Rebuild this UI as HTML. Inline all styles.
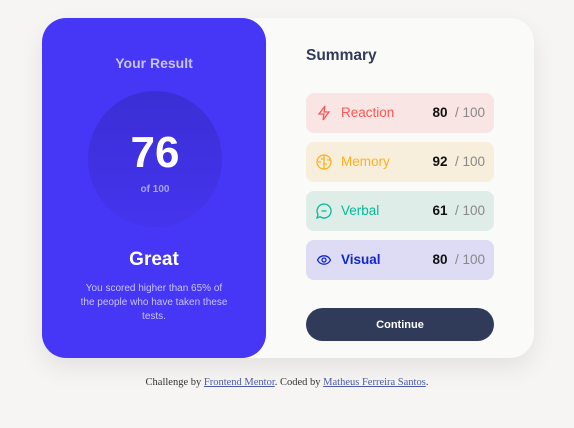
<!DOCTYPE html>
<html><head><style>
body{margin:0;width:574px;height:428px;background:#f6f5f3;font-family:"Liberation Sans",sans-serif;position:relative;overflow:hidden}
.card{position:absolute;left:42px;top:18px;width:492px;height:340px;background:#fafaf9;border-radius:24px;box-shadow:0 10px 24px rgba(0,0,0,.08)}
.left{position:absolute;left:42px;top:18px;width:224px;height:340px;background:#4636f5;border-radius:24px;text-align:center;color:#fff}
.yr{position:absolute;top:37px;width:100%;font-size:14px;font-weight:bold;color:#c8c3ff}
.circ{position:absolute;left:46px;top:73px;width:134px;height:136px;border-radius:50%;background:linear-gradient(#3a2fd4,#4534ee)}
.n{position:absolute;top:40px;width:100%;font-size:44px;font-weight:bold;line-height:44px}
.of{position:absolute;top:93px;width:100%;font-size:10px;font-weight:bold;color:#a9a2f5}
.g{position:absolute;top:231px;width:100%;font-size:19px;font-weight:bold}
.p{position:absolute;top:264px;left:38px;width:148px;font-size:10px;line-height:14px;color:#c8c3ff}
h2{position:absolute;left:306px;top:47px;margin:0;font-size:15.5px;color:#303b5a}
.row{position:absolute;left:306px;width:188px;height:40px;border-radius:8px;font-size:13.5px}
.row .ic{position:absolute;left:10px;top:12px}
.row .l{position:absolute;left:35px;top:12px}
.row .s{position:absolute;right:9px;top:12px;font-weight:bold;color:#111}
.row .s span{color:#888;font-weight:normal}
.btn{position:absolute;left:306px;top:308px;width:188px;height:33px;border-radius:17px;background:#303b5a;color:#fff;font-size:11px;font-weight:bold;text-align:center;line-height:34px}
.ft{position:absolute;top:377px;width:100%;text-align:center;font-family:"Liberation Serif",serif;font-size:10.5px;color:#333}
.ft a{color:#4a5aa8;text-decoration:underline}
</style></head><body>
<div class="card"></div>
<div class="left">
<div class="yr">Your Result</div>
<div class="circ"><div class="n">76</div><div class="of">of 100</div></div>
<div class="g">Great</div>
<div class="p">You scored higher than 65% of the people who have taken these tests.</div>
</div>
<h2>Summary</h2>
<div class="row" style="top:93px;background:#f9e5e3"><svg class="ic" width="16" height="16" viewBox="0 0 16 16" fill="none" stroke="#f55" stroke-width="1.3"><path d="M9 1 3 9h5l-1 6 6-8H8z"/></svg><span class="l" style="color:#f55">Reaction</span><span class="s">80 &nbsp;<span>/ 100</span></span></div>
<div class="row" style="top:142px;background:#f8eedc"><svg class="ic" width="16" height="16" viewBox="0 0 16 16" fill="none" stroke="#ffb01f" stroke-width="1.3"><circle cx="8" cy="8" r="7"/><path d="M8 1v14M8 5H5M8 10h3M5 8H2M11 6h3"/></svg><span class="l" style="color:#ffb01f">Memory</span><span class="s">92 &nbsp;<span>/ 100</span></span></div>
<div class="row" style="top:191px;background:#dfede9"><svg class="ic" width="16" height="16" viewBox="0 0 16 16" fill="none" stroke="#00ba98" stroke-width="1.3"><path d="M8 1a7 7 0 1 1-4 12.7L1 15l1-3.5A7 7 0 0 1 8 1zM5.5 8h5"/></svg><span class="l" style="color:#00ba98">Verbal</span><span class="s">61 &nbsp;<span>/ 100</span></span></div>
<div class="row" style="top:240px;background:#dedcf4"><svg class="ic" width="16" height="16" viewBox="0 0 16 16" fill="none" stroke="#1125d6" stroke-width="1.3"><path d="M1.5 8C3 5 5.3 3.8 8 3.8S13 5 14.5 8C13 11 10.7 12.2 8 12.2S3 11 1.5 8z"/><circle cx="8" cy="8" r="2"/></svg><span class="l" style="color:#1125d6;font-weight:bold">Visual</span><span class="s">80 &nbsp;<span>/ 100</span></span></div>
<div class="btn">Continue</div>
<div class="ft">Challenge by <a>Frontend Mentor</a>. Coded by <a>Matheus Ferreira Santos</a>.</div>
</body></html>
